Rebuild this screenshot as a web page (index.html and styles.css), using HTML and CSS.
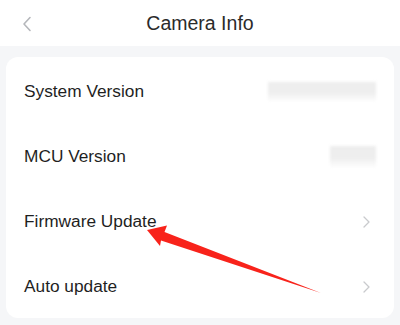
FILE: index.html
```html
<!DOCTYPE html>
<html>
<head>
<meta charset="utf-8">
<link rel="stylesheet" href="styles.css">
</head>
<body>
<div class="page">
  <header class="topbar">
    <span class="back">
      <svg width="10" height="16" viewBox="0 0 10 16"><path d="M8 1.5 L2 8 L8 14.5" fill="none" stroke="#b5b7bb" stroke-width="1.6" stroke-linecap="round" stroke-linejoin="round"/></svg>
    </span>
    <h1 class="title">Camera Info</h1>
    <span></span>
  </header>
  <main class="content">
    <div class="card">
      <div class="row"><span class="label">System Version</span><span class="blur blur-wide"></span></div>
      <div class="row"><span class="label">MCU Version</span><span class="blur blur-small"></span></div>
      <div class="row"><span class="label">Firmware Update</span><span class="chev"><svg width="7" height="12" viewBox="0 0 7 12"><path d="M1 1 L6 6 L1 11" fill="none" stroke="#c9cacd" stroke-width="1.3" stroke-linecap="round" stroke-linejoin="round"/></svg></span></div>
      <div class="row"><span class="label">Auto update</span><span class="chev"><svg width="7" height="12" viewBox="0 0 7 12"><path d="M1 1 L6 6 L1 11" fill="none" stroke="#c9cacd" stroke-width="1.3" stroke-linecap="round" stroke-linejoin="round"/></svg></span></div>
    </div>
  </main>
  <svg class="arrow" width="400" height="325" viewBox="0 0 400 325">
    <polygon points="147,230 167,225.5 164.5,232 321,293 161,240.5 160,246" fill="#f8231b"/>
  </svg>
</div>
</body>
</html>
```
FILE: styles.css
```css
html, body {
  margin: 0;
  padding: 0;
}
body {
  width: 400px;
  height: 325px;
  background: #f5f6f8;
  font-family: "Liberation Sans", Arial, sans-serif;
  color: #222;
  overflow: hidden;
}
.page {
  position: relative;
  width: 400px;
  height: 325px;
}
.topbar {
  height: 46px;
  background: #ffffff;
  display: grid;
  grid-template-columns: 60px 1fr 60px;
  align-items: center;
}
.back {
  display: flex;
  padding-left: 22px;
  padding-top: 1px;
}
.title {
  margin: 0;
  text-align: center;
  font-size: 19.5px;
  font-weight: normal;
  color: #2b2b2b;
}
.content {
  padding: 11px 6px 0;
}
.card {
  background: #ffffff;
  border-radius: 12px;
  padding-top: 2px;
  height: 259px;
}
.row {
  height: 65px;
  display: flex;
  align-items: center;
  justify-content: space-between;
  padding: 0 22px 0 18px;
}
.label {
  font-size: 17.3px;
  color: #1f1f1f;
}
.blur {
  display: block;
  background: linear-gradient(180deg, #ededed 0%, #eeeeee 55%, #f7f7f7 80%, #fff 100%);
  filter: blur(1.5px);
}
.blur-wide {
  width: 108px;
  height: 20px;
  margin-right: -4px;
}
.blur-small {
  width: 46px;
  height: 22px;
  margin-right: -4px;
}
.chev {
  display: flex;
  margin-right: 2px;
}
.arrow {
  position: absolute;
  left: 0;
  top: 0;
}
```
